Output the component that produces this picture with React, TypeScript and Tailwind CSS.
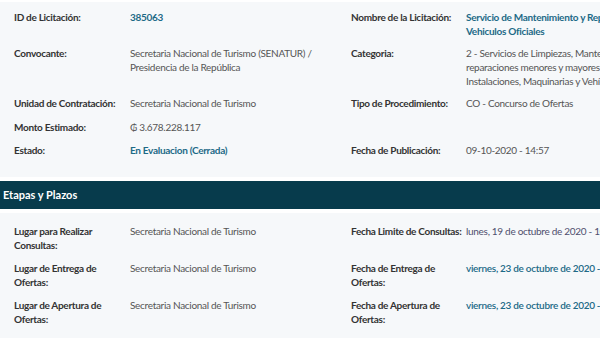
const label = "font-bold text-[#333]";
const value = "text-[#555]";
const link = "text-[#1d6a87]";

type Cell = { label: React.ReactNode; value: React.ReactNode; valueClass?: string };

function Row({ left, right, minH }: { left?: Cell; right?: Cell; minH?: string }) {
  return (
    <div className={`grid grid-cols-[116px_221px_115px_300px] whitespace-nowrap ${minH ?? ""}`}>
      <div className={label}>{left?.label}</div>
      <div className={left?.valueClass ?? value}>{left?.value}</div>
      <div className={label}>{right?.label}</div>
      <div className={right?.valueClass ?? value}>{right?.value}</div>
    </div>
  );
}

export default function App() {
  return (
    <div className="w-[600px] h-[338px] overflow-hidden bg-[#f6f8fa] border-t-2 border-white font-['Lato',sans-serif] text-[10px] leading-[14px] tracking-[-0.3px]">
      <div className="w-[760px]">
        <div className="flex flex-col gap-y-[8px] pl-[14px] pt-[8px] h-[175px]">
          <Row
            left={{ label: "ID de Licitación:", value: "385063", valueClass: `${link} font-bold` }}
            right={{
              label: "Nombre de la Licitación:",
              value: (
                <>
                  Servicio de Mantenimiento y Reparación de
                  <br />
                  Vehiculos Oficiales
                </>
              ),
              valueClass: `${link} font-bold`,
            }}
          />
          <Row
            left={{
              label: "Convocante:",
              value: (
                <>
                  Secretaria Nacional de Turismo (SENATUR) /
                  <br />
                  Presidencia de la República
                </>
              ),
            }}
            right={{
              label: "Categoria:",
              value: (
                <>
                  2 - Servicios de Limpiezas, Mantenimientos y
                  <br />
                  reparaciones menores y mayores de
                  <br />
                  Instalaciones, Maquinarias y Vehículos
                </>
              ),
            }}
          />
          <Row
            minH="min-h-[16px]"
            left={{ label: "Unidad de Contratación:", value: "Secretaria Nacional de Turismo" }}
            right={{ label: "Tipo de Procedimiento:", value: "CO - Concurso de Ofertas" }}
          />
          <Row
            minH="min-h-[15px]"
            left={{ label: "Monto Estimado:", value: "₲ 3.678.228.117" }}
          />
          <Row
            left={{ label: "Estado:", value: "En Evaluacion (Cerrada)", valueClass: `${link} font-bold` }}
            right={{ label: "Fecha de Publicación:", value: "09-10-2020 - 14:57" }}
          />
        </div>

        <div className="bg-white py-[4px]">
          <div className="bg-[#073b4c] h-[28px] flex items-center px-[3px] text-white font-bold text-[11px] tracking-normal">
            Etapas y Plazos
          </div>
        </div>

        <div className="flex flex-col gap-y-[9px] pl-[14px] pt-[11px]">
          <Row
            left={{
              label: (
                <>
                  Lugar para Realizar
                  <br />
                  Consultas:
                </>
              ),
              value: "Secretaria Nacional de Turismo",
            }}
            right={{
              label: "Fecha Limite de Consultas:",
              value: "lunes, 19 de octubre de 2020 - 10:00",
              valueClass: "text-[#4f4f6e]",
            }}
          />
          <Row
            left={{
              label: (
                <>
                  Lugar de Entrega de
                  <br />
                  Ofertas:
                </>
              ),
              value: "Secretaria Nacional de Turismo",
            }}
            right={{
              label: (
                <>
                  Fecha de Entrega de
                  <br />
                  Ofertas:
                </>
              ),
              value: "viernes, 23 de octubre de 2020 - 10:00",
              valueClass: `${link} font-semibold`,
            }}
          />
          <Row
            left={{
              label: (
                <>
                  Lugar de Apertura de
                  <br />
                  Ofertas:
                </>
              ),
              value: "Secretaria Nacional de Turismo",
            }}
            right={{
              label: (
                <>
                  Fecha de Apertura de
                  <br />
                  Ofertas:
                </>
              ),
              value: "viernes, 23 de octubre de 2020 - 10:30",
              valueClass: `${link} font-semibold`,
            }}
          />
        </div>
      </div>
    </div>
  );
}
